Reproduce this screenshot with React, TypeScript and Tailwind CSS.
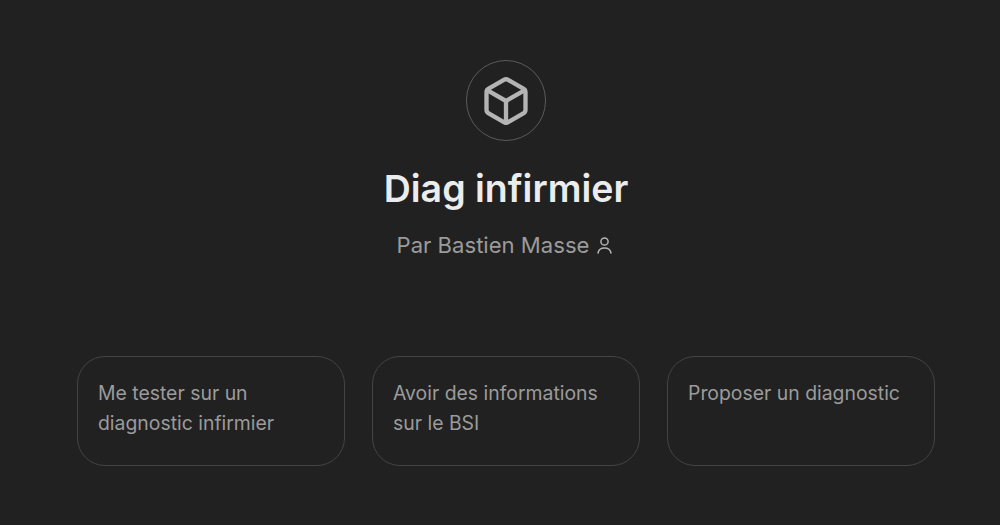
import React from "react";

const cards = [
  ["Me tester sur un", "diagnostic infirmier"],
  ["Avoir des informations", "sur le BSI"],
  ["Proposer un diagnostic"],
];

export default function App() {
  return (
    <div className="h-[525px] w-[1000px] overflow-hidden bg-[#212121] pl-[12px] font-['Inter',sans-serif]">
      <div className="flex flex-col items-center pt-[60px]">
        <div className="flex h-[81px] w-[80px] items-center justify-center rounded-full border border-[#5a5a5a]">
          <svg width="52" height="52" viewBox="0 0 24 24" fill="none" stroke="#b4b4b4" strokeWidth="2" strokeLinecap="round" strokeLinejoin="round">
            <path d="M21 8a2 2 0 0 0-1-1.730l-7-4a2 2 0 0 0-2 0l-7 4A2 2 0 0 0 3 8v8a2 2 0 0 0 1 1.730l7 4a2 2 0 0 0 2 0l7-4A2 2 0 0 0 21 16Z" />
            <path d="m3.300 7 8.700 5 8.700-5" />
            <path d="M12 22V12" />
          </svg>
        </div>
        <h1 className="mt-[26px] text-[37.500px] leading-[44px] font-semibold text-[#ececec]">Diag infirmier</h1>
        <div className="mt-[19px] mr-[2px] flex items-center gap-[7px] text-[22.100px] leading-[30px] text-[#9b9b9b]">
          <span>Par Bastien Masse</span>
          <svg width="17" height="19" viewBox="0 0 17 19" fill="none" stroke="#b4b4b4" strokeWidth="1.500" strokeLinecap="round">
            <circle cx="8.500" cy="5.500" r="3.600" />
            <path d="M2 17c.6-3.400 3-5 6.500-5s5.900 1.600 6.500 5" />
          </svg>
        </div>
      </div>
      <div className="mt-[96px] flex justify-center gap-[27px]">
        {cards.map((lines) => (
          <div key={lines[0]} className="h-[110px] w-[268px] rounded-[28px] border border-[#444444] px-[20px] pt-[21px] text-[19.400px] leading-[30px] text-[#9b9b9b]">
            {lines.map((l) => (
              <div key={l}>{l}</div>
            ))}
          </div>
        ))}
      </div>
    </div>
  );
}
